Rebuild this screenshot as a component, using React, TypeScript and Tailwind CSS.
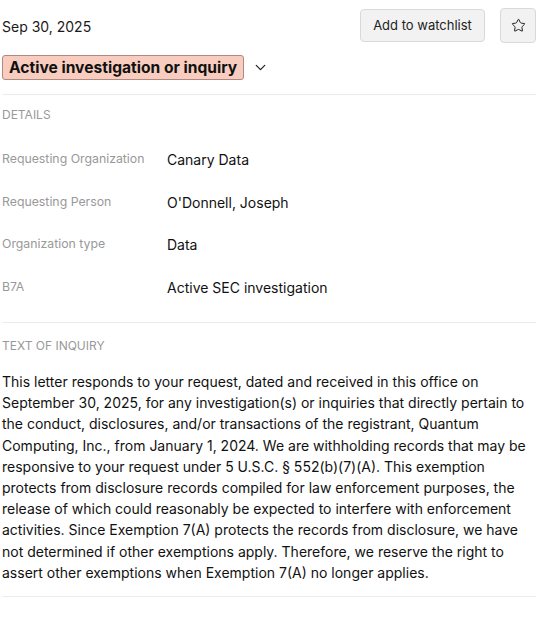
import { ChevronDown, Star } from "lucide-react";

const details = [
  { label: "Requesting Organization", value: "Canary Data" },
  { label: "Requesting Person", value: "O'Donnell, Joseph" },
  { label: "Organization type", value: "Data" },
  { label: "B7A", value: "Active SEC investigation" },
];

export default function App() {
  return (
    <div className="w-[548px] bg-white pl-[2px] pr-[12px] pt-2 text-[#111] font-['Inter',sans-serif]">
      {/* header */}
      <div className="flex items-center justify-between h-[35px]">
        <span className="text-[14px] text-[#1a1a1a] pt-[1px]">Sep 30, 2025</span>
        <div className="flex items-center gap-[15px]">
          <button className="h-[33px] w-[125px] rounded-[4px] border border-[#d9d9d9] bg-[#f2f2f2] text-[13px] text-[#222]">
            Add to watchlist
          </button>
          <button className="h-[35px] w-[36px] rounded-[4px] border border-[#d9d9d9] bg-[#f2f2f2] flex items-center justify-center">
            <Star className="w-[15px] h-[15px] text-[#222]" strokeWidth={1.6} />
          </button>
        </div>
      </div>

      <div className="mt-[12px] flex items-center gap-2">
        <span className="h-[25px] px-[6px] flex items-center rounded-[3px] border border-[#b08a80] bg-[#f8cdbf] text-[15.6px] font-bold text-[#111]">
          Active investigation or inquiry
        </span>
        <ChevronDown className="w-[17px] h-[17px] text-[#222]" strokeWidth={1.8} />
      </div>

      <div className="mt-[14px] border-t border-[#ececec]" />

      {/* details */}
      <div className="pt-[12px] pb-[3px]">
        <div className="text-[12px] text-[#999] h-[15px] leading-[15px]">DETAILS</div>
        <div className="mt-[27px] flex flex-col">
          {details.map((d) => (
            <div key={d.label} className="flex items-start h-[42.5px]">
              <span className="w-[165px] text-[12.3px] text-[#999] leading-[20px]">{d.label}</span>
              <span className="text-[14px] text-[#111] leading-[22px]">{d.value}</span>
            </div>
          ))}
        </div>
      </div>

      <div className="border-t border-[#ececec]" />

      {/* text of inquiry */}
      <div className="pt-[15px] pb-[13px]">
        <div className="text-[12px] text-[#999] h-[15px] leading-[15px]">TEXT OF INQUIRY</div>
        <p className="mt-[18px] text-[14px] leading-[21.2px] text-[#111]">
          This letter responds to your request, dated and received in this office on September 30, 2025, for any
          investigation(s) or inquiries that directly pertain to the conduct, disclosures, and/or transactions of the
          registrant, Quantum Computing, Inc., from January 1, 2024. We are withholding records that may be responsive
          to your request under 5 U.S.C. § 552(b)(7)(A). This exemption protects from disclosure records compiled for
          law enforcement purposes, the release of which could reasonably be expected to interfere with enforcement
          activities. Since Exemption 7(A) protects the records from disclosure, we have not determined if other
          exemptions apply. Therefore, we reserve the right to assert other exemptions when Exemption 7(A) no longer
          applies.
        </p>
      </div>

      <div className="border-t border-[#ececec]" />
    </div>
  );
}
